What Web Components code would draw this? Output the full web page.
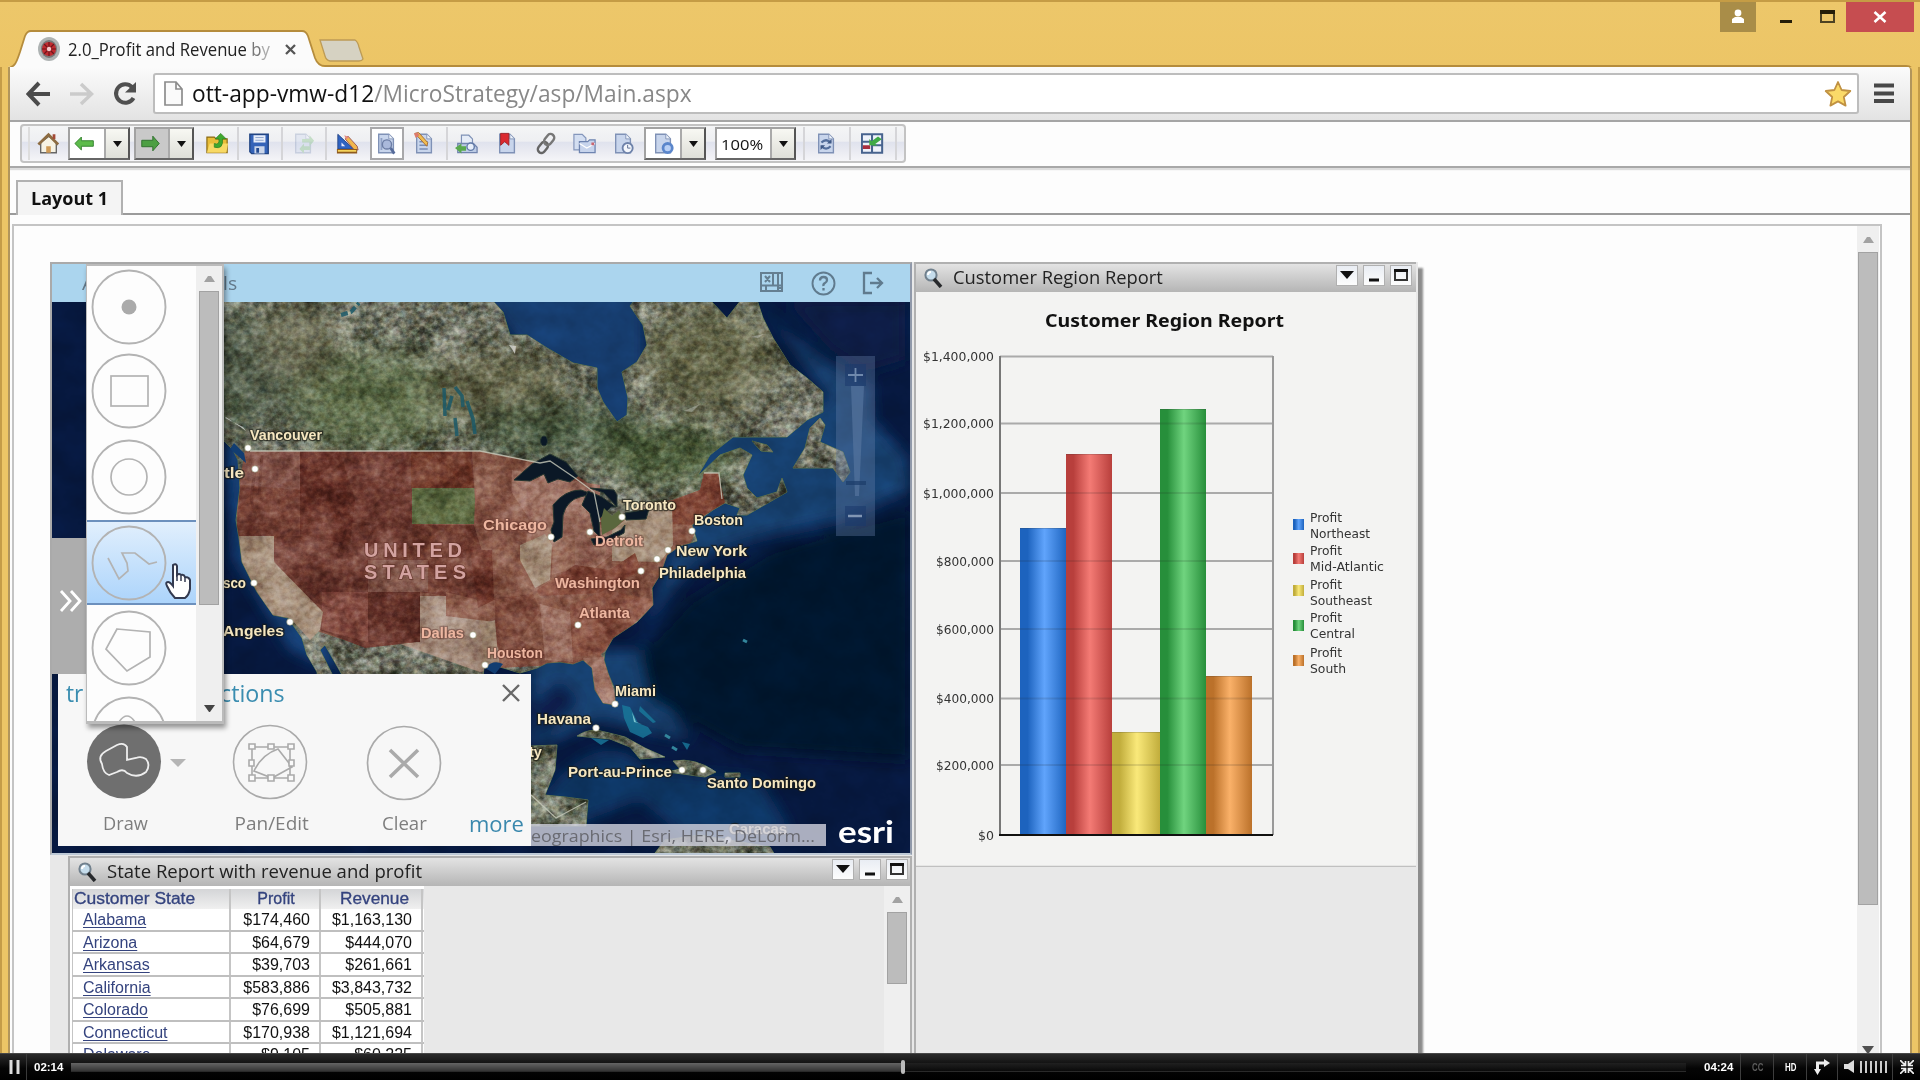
<!DOCTYPE html>
<html lang="en"><head><meta charset="utf-8"><title>2.0_Profit and Revenue by</title>
<style>
html,body{margin:0;width:1920px;height:1080px;overflow:hidden;background:#ecc566}
body{font-family:"Open Sans","Noto Sans",sans-serif;color:#111}
</style></head><body>
<app-root></app-root>
<script>
const define=(name,html,setup)=>customElements.define(name,class extends HTMLElement{
  connectedCallback(){ if(this.shadowRoot)return;
    const r=this.attachShadow({mode:'open'});
    r.innerHTML='<style>*{box-sizing:border-box}svg{display:block}</style>'+(typeof html==='function'?html(this):html);
    if(setup)setup(this,r);}
});
/* Text squeezed or stretched horizontally to a given width */
define('fit-text',`<style>:host{display:inline-block;white-space:pre;flex:none}span{display:inline-block;transform-origin:0 50%}</style><span><slot></slot></span>`,(el,r)=>{
  const s=r.querySelector('span'),w=+el.getAttribute('w');
  const n=s.offsetWidth; if(n&&w){s.style.transform=`scaleX(${w/n})`;el.style.width=w+'px';}
});

/* ---------- browser chrome ---------- */
define('title-strip',`<style>
:host{display:flex;height:67px;flex:none;position:relative;border-top:2px solid #c59c45;background:linear-gradient(#edc76a,#ecc566)}
.shape{position:absolute;left:0;top:-2px}
.tab{position:relative;display:flex;align-items:center;margin:30px 0 0 37px;height:34px;width:275px;font-size:18px}
.tab fit-text{margin-left:7px;color:#222}.tab i{color:#aaa;font-style:normal}
.x{margin-left:15px}
.grow{flex:1}.ctl{position:relative;display:flex;height:30px}
.user{width:36px;background:#a98d48;display:grid;place-items:center}
.min{width:60px;display:grid;place-items:center}.max{width:30px}
.close{width:68px;background:#c64d50;display:grid;place-items:center;margin-right:6px}
</style>
<svg class="shape" width="1920" height="67" viewBox="0 0 1920 67"><path d="M8 68V67C16 66 17 60 20 52L25 36Q27 31 31 31H302Q306 31 308 36L315 58Q318 67 325 67.5" fill="#fbfbfb"/><path d="M9 68C16 66 17 60 20 52L25 36Q27 31 31 31H302Q306 31 308 36L315 58Q318 66 325 66H1906Q1911 66 1912 69" fill="none" stroke="#b58c3c" stroke-width="1.8"/><path d="M320 40H355Q358 42 359 47L363 59Q362 61 359 61H330Q326 60 325 56Z" fill="#d6d2c2" stroke="#bd9b55" stroke-width="1.3"/></svg>
<div class="tab"><svg width="24" height="26" viewBox="0 0 24 26"><ellipse cx="12" cy="13" rx="11" ry="12" fill="#aeb3b3"/><ellipse cx="12" cy="13" rx="8" ry="9" fill="#777"/><circle cx="12" cy="13" r="7" fill="#c12b30"/><path d="M12 6v14M5 13h14M7 8l10 10M17 8L7 18" stroke="#70151b" stroke-width="1.2"/><circle cx="12" cy="13" r="2.2" fill="#f3caca"/></svg><fit-text w="202">2.0_Profit and Revenue <i><span style="color:#777">b</span>y</i></fit-text><svg class="x" width="11" height="11" viewBox="0 0 11 11"><path d="M1 1l9 9M10 1L1 10" stroke="#555" stroke-width="2.3"/></svg></div>
<div class="grow"></div>
<div class="ctl"><div class="user"><svg width="16" height="16" viewBox="0 0 16 16"><circle cx="8" cy="4" r="3.400" fill="#fff"/><path d="M2 14v-4l3-2h6l3 2v4z" fill="#fff"/></svg></div><div class="min"><svg width="14" height="14"><rect y="10" x="1" width="12" height="3" fill="#251d08"/></svg></div>
<svg class="max" width="30" height="30"><path d="M5 9v11h13V9" fill="none" stroke="#4d4222" stroke-width="2"/><path d="M4 10h15" stroke="#251d08" stroke-width="4"/></svg><div class="close"><svg width="14" height="12" viewBox="0 0 14 12"><path d="M1.500 1l11 10M12.500 1l-11 10" stroke="#fff" stroke-width="2.600"/></svg></div></div>`);

define('nav-bar',`<style>
:host{display:flex;height:55px;flex:none;align-items:center;background:linear-gradient(#fbfbfb,#e3e3e3);border-bottom:2px solid #a5a5a5;padding-left:16px}
.b{margin-right:18px}.omni{display:flex;align-items:center;flex:1;height:41px;border:2px solid #bdbdbd;border-radius:3px;background:#fff;padding:0 5px 0 9px;margin-left:-4px;margin-right:15px}
.url{font-size:23px;margin-left:9px;color:#888;line-height:30px;padding-bottom:1px}.url b{font-weight:400;color:#111}.g{flex:1}.menu{margin-right:16px}
</style>
<svg class="b" width="25" height="26" viewBox="0 0 25 26"><path d="M24 13H3M13 2L2.500 13 13 24" fill="none" stroke="#4b4b4b" stroke-width="4"/></svg>
<svg class="b" width="25" height="26" viewBox="0 0 25 26"><path d="M1 13h21M12 3l10.500 10L12 23" fill="none" stroke="#cbcbcb" stroke-width="3.500"/></svg>
<svg class="b" width="25" height="26" viewBox="0 0 25 26" style="margin-right:20px"><path d="M20 6A9.300 9.300 0 1 0 21.500 17" fill="none" stroke="#505050" stroke-width="4"/><path d="M13 11.500h11V1z" fill="#505050"/></svg>
<div class="omni"><svg width="19" height="25" viewBox="0 0 19 25"><path d="M1 1h11l6 7v16H1zM12 1v7h6" fill="#fafafa" stroke="#8c8c8c" stroke-width="1.700"/></svg><div class="url"><fit-text w="500"><b>ott-app-vmw-d12</b>/MicroStrategy/asp/Main.aspx</fit-text></div><div class="g"></div>
<svg width="28" height="28" viewBox="0 0 28 28"><path d="M14 2l3.600 8 8.700 1-6.500 6 1.800 8.600L14 21.400l-7.600 4.200L8.200 17l-6.500-6 8.700-1z" fill="#fbda68" stroke="#c09142" stroke-width="1.800" stroke-linejoin="round"/></svg></div>
<svg class="menu" width="20" height="21"><path d="M0 2.500h20M0 10.500h20M0 18h20" stroke="#484848" stroke-width="4.200"/></svg>`);

/* ---------- toolbar ---------- */
const pg='<path d="M4 2h11l5 5v15H4z" fill="#c8d5ec" stroke="#7f91b6" stroke-width="1.500"/><path d="M15 2v5h5" fill="#eef3fb" stroke="#7f91b6"/>';
const IC={
home:'<path d="M4 11v11h17V11l-8-7z" fill="#f7f3e4" stroke="#666" stroke-width="1.500"/><path d="M1.500 13L12.500 2.500 23 13" fill="none" stroke="#8d6c42" stroke-width="3"/><path d="M17 2h3v5h-3z" fill="#a34a37"/><path d="M10 15h5v7h-5z" fill="#cf9a55"/>',
back:'<path d="M1 12l7-7v4h13v6H8v4z" fill="#5dbb4b" stroke="#2f7f2b" stroke-width="1"/>',
fwd:'<path d="M22 12l-7-8v4.500H3v7h12V20z" fill="#4c9f43" stroke="#2d6e2a"/>',
folder:'<path d="M1 5h8l2 2h12v15H1z" fill="#e9bd38" stroke="#8a6a13" stroke-width="1.300"/><path d="M1 22l3-10h20l-2 10z" fill="#f8d965"/><path d="M9 12q6 2 5-5h-4l6-6 6 6h-4q1 12-9 9z" fill="#3fa82f" stroke="#287a1e" stroke-width=".7"/>',
save:'<path d="M2 2h20v21H4l-2-2z" fill="#3463b8" stroke="#224583" stroke-width="1.500"/><path d="M6 3h13v8H6z" fill="#e7edf9"/><path d="M8 5.500h9M8 8.500h9" stroke="#8ca3cc"/><path d="M7 15h11v8H7z" fill="#cbd6ea"/><path d="M9 17h3v5H9z" fill="#234a91"/>',
faded:'<g opacity=".33">'+pg+'<path d="M11 7h8V3l5 6-5 6v-4h-8zM20 15h-7v-3l-5 6 5 5v-4h7z" fill="#70b870"/></g>',
ruler:'<path d="M2 2v16h17z" fill="#2f63c3" stroke="#274785"/><path d="M6 11v4h4z" fill="#eef"/><path d="M10 7l10 12 4 0-1-4L13 4z" fill="#f1b74c" stroke="#955"/><path d="M9 3l5 2-3 3z" fill="#e58a7f"/><path d="M1 18h22v5H1z" fill="#8f5a1d"/><path d="M2 20h20" stroke="#f5d35b" stroke-width="2"/>',
preview:pg+'<path d="M7 6v13M9 9h6" stroke="#8fa0c5" stroke-width="2"/><circle cx="13" cy="13" r="5" fill="#aab9db" stroke="#6d7ea5" stroke-width="1.500"/><path d="M17 17l4 6" stroke="#566b9a" stroke-width="3"/>',
pencil:pg+'<path d="M7 10h9M7 14h9M7 18h9" stroke="#788db5" stroke-width="1.600"/><path d="M2 1l13 14 1-4L6 0z" fill="#f0bd51" stroke="#a56b2f"/><path d="M1 1l4-1 2 3-4 3z" fill="#dc7b6d"/>',
exp:'<path d="M7 3h8l4 4v8H7z" fill="#e5ecf7" stroke="#7f91b6" stroke-width="1.300"/><path d="M3 12h17l4 4v6H3z" fill="#bccbe5" stroke="#7184ae" stroke-width="1.400"/><circle cx="17" cy="15.500" r="4" fill="#e7eefa" stroke="#617aa8" stroke-width="1.500"/><path d="M0 17l7-5v3h5v5H7v3z" fill="#59a94e"/>',
mark:pg+'<path d="M5 1h9v13l-4.500-4L5 14z" fill="#db2930" stroke="#9d2027"/>',
link:'<g transform="rotate(-52 12 12)" fill="none"><rect x="0" y="8" width="13" height="8" rx="4" stroke="#666" stroke-width="2.600"/><rect x="11" y="8" width="13" height="8" rx="4" stroke="#777" stroke-width="2.600"/></g>',
mail:'<path d="M1 2h9l4 4v13H1z" fill="#d3def1" stroke="#8496bb" stroke-width="1.300"/><path d="M7 10h9l2-2h6v14H7z" fill="#c7d4ec" stroke="#6e84b0" stroke-width="1.400"/><path d="M7 12l8 5 9-5" fill="none" stroke="#fff" stroke-width="1.300"/><path d="M20 11h3v3h-3z" fill="#ca6570"/>',
sched:pg+'<circle cx="17" cy="17" r="5.500" fill="#f3f6fc" stroke="#6e82aa" stroke-width="2"/><path d="M17 13.500V17h3" fill="none" stroke="#57698f"/>',
gear:pg+'<circle cx="17" cy="17" r="5" fill="#b9d0f5" stroke="#5b86cb" stroke-width="3"/>',
refresh:pg+'<path d="M7 11q5-5 10 0M17 15q-5 5-10 0" fill="none" stroke="#536e9c" stroke-width="2.400"/><path d="M13 12h5V7zM11 14H6v5z" fill="#3f5986"/>',
grid:'<path d="M1 2h22v20H1z" fill="#eef2fa" stroke="#47638e" stroke-width="2.200"/><path d="M12 2v20M1 10h11M13 14h10" stroke="#47638e" stroke-width="2.200"/><path d="M2 14h8v4H2z" fill="#a92f3e"/><path d="M9 14V7l2.500 2.500 7-5 4 3-7 5 2.500 2z" fill="#3faa45"/>'
};
const svg=n=>`<svg width="23" height="23" viewBox="0 0 25 24">${IC[n]}</svg>`;
const dd='<i class="dd"><svg width="9" height="6"><path d="M0 0h9L4.500 6z" fill="#111"/></svg></i>';
const cell=(w,n,c='')=>`<div class="c ${c}" style="width:${w}px">${svg(n)}</div>`;
const combo=(w,inner,c='')=>`<div class="combo ${c}" style="width:${w}px"><span>${inner}</span>${dd}</div>`;
define('tool-bar',`<style>
:host{display:flex;height:46px;flex:none;padding:2px 0 0 10px;border-bottom:2px solid #a8a8a8;box-shadow:0 2px 1px #ddd;background:#fdfdfd;position:relative;z-index:1}
.bar{display:flex;align-items:stretch;height:39px;width:886px;border:2px solid #c3c3c3;border-radius:4px;background:linear-gradient(#f4f5f6 0,#eeeff2 44%,#dfe2ed 45%,#e9eaf1 70%,#f5f5f8);padding:1px 0}
.c{display:grid;place-items:center;flex:none;padding-right:2px}.s{border-right:2px solid #d5d5d8}.grip{width:8px;border-right:2px solid #ddd;flex:none}
.box{background:#fff;border:2px solid #a8a8aa}.combo{display:flex;flex:none;border:2px solid #a2a2a2;background:#fff;border-right-color:#555;border-bottom-color:#666}
.combo span{flex:1;display:grid;place-items:center;font-size:15px;padding-right:4px}.combo.k span{background:#c9c9c9}
.combo.n span{padding:0}.dd{width:24px;background:linear-gradient(#f8f8f3,#dedfd8);border-left:2px solid #aaa;display:grid;place-items:center}.gap{flex:none}
</style><div class="bar"><div class="grip"></div>${cell(38,'home')}${combo(62,svg('back'))}<div class="gap" style="width:4px"></div>${combo(60,svg('fwd'),'k')}<div class="gap" style="width:6px"></div>${cell(39,'folder','s')}${cell(44,'save','s')}${cell(44,'faded','s')}${cell(43,'ruler')}${cell(34,'preview','box')}${cell(44,'pencil','s')}${cell(39,'exp')}${cell(42,'mark')}${cell(36,'link')}${cell(40,'mail')}${cell(39,'sched')}${combo(62,svg('gear'),'n')}<div class="gap" style="width:9px"></div>${combo(81,'<fit-text w="42">100%</fit-text>')}<div class="gap s" style="width:9px"></div>${cell(46,'refresh','s')}${cell(46,'grid','s')}</div>`);

define('layout-tabs',`<style>:host{display:flex;height:47px;flex:none;align-items:flex-end;background:#fdfdfd;position:relative}
.lead{width:6px;height:2px;background:#9b9b9b}.t{width:107px;height:35px;border:2px solid #b1b1b1;border-bottom:0;background:#f4f4f4;display:flex;align-items:center;justify-content:center;font-weight:700;font-size:18px;color:#111;padding-bottom:1px}.r{flex:1;height:2px;background:#9b9b9b}</style>
<div class="lead"></div><div class="t"><fit-text w="77">Layout 1</fit-text></div><div class="r"></div>`);

/* scroll-bar: top = arrow area, thumb = thumb height, foot = arrow strip at the bottom */
define('scroll-bar',el=>`<style>:host{display:flex;flex-direction:column;align-items:center;background:#efefef}
.a{height:${el.getAttribute('top')}px;flex:none;display:grid;place-items:center}.t{flex:none;width:20px;height:${el.getAttribute('thumb')}px;background:#bcbcbc;border:1.500px solid #a2a2a2}.g{flex:1}.e{height:${el.getAttribute('foot')||0}px;overflow:hidden}</style>
<div class="a"><svg width="11" height="7"><path d="M0 7L4 1h3l4 6z" fill="#a2a2a2"/></svg></div><div class="t"></div><div class="g"></div>${el.hasAttribute('foot')?'<div class="e"><svg width="12" height="7"><path d="M0 0h12L7 7H5z" fill="#505050"/></svg></div>':''}`);

/* ---------- report window ---------- */
define('report-window',el=>`<style>:host{display:flex;flex-direction:column;border:2px solid #b0b0b0;border-bottom:0}
header{height:28px;flex:none;display:flex;align-items:center;background:linear-gradient(#e3e3e3,#b5b5b5);padding:0 ${el.getAttribute('pr')||2}px 0 7px;font-size:18px;color:#222}
header fit-text{margin:-3px 0 0 10px;line-height:26px}.g{flex:1}.b{width:22px;height:21px;margin:0 0 6px 5px;background:linear-gradient(#e9edf3,#fdfdfd);border:1px solid #b0b0b0;display:grid;place-items:center}.body{flex:1;display:flex;min-height:0}</style>
<header><svg width="20" height="20" viewBox="0 0 20 20"><circle cx="8" cy="7" r="5.600" fill="#c5dceb" stroke="#71808d" stroke-width="2"/><path d="M5 7q0-3 3-3" stroke="#fff" stroke-width="2" fill="none"/><path d="M11 11l7 8" stroke="#27292c" stroke-width="3.500"/></svg><fit-text w="${el.getAttribute('w')}">${el.getAttribute('label')}</fit-text><div class="g"></div>
<div class="b"><svg width="14" height="8"><path d="M0 0h14L7 8z" fill="#111"/></svg></div><div class="b"><svg width="12" height="14"><path d="M1 12h10" stroke="#111" stroke-width="3"/></svg></div><div class="b"><svg width="16" height="14"><path d="M2 3v9h12V3" fill="none" stroke="#333" stroke-width="2"/><path d="M1 2.500h14" stroke="#111" stroke-width="3"/></svg></div></header><div class="body"><slot></slot></div>`);

/* ---------- chart ---------- */
const bars=[[1020,47,528,'#1d63be','#60a4fc'],[1066,46,454,'#b83f3c','#f47b75'],[1112,48,732,'#c1ad3c','#fae97a'],[1160,46,409,'#278f3b','#70d47f'],[1206,46,676,'#bb712a','#fab169']];
const leg=[['Northeast',522,519,60],['Mid-Atlantic',555,553,74],['Southeast',589,585,62],['Central',622,620,45],['South',657,655,36]];
define('bar-chart',()=>{const gy=[356.5,423.5,493,561,629,698.5,765,835];let s='';
gy.slice(0,7).forEach(y=>s+=`<path d="M1000 ${y}h273" stroke="#aaa" stroke-width="1.800"/>`);
gy.forEach((y,i)=>{const v=1400000-i*200000,t='$'+v.toLocaleString('en-US'),w=v?(v>999999?71:58):16;s+=`<text x="${994-w}" y="${y+4.500}" textLength="${w}" lengthAdjust="spacingAndGlyphs">${t}</text>`});
bars.forEach((b,i)=>{s+=`<linearGradient id="b${i}"><stop offset="0" stop-color="${b[3]}"/><stop offset=".16" stop-color="${b[3]}"/><stop offset=".52" stop-color="${b[4]}"/><stop offset="1" stop-color="${b[3]}"/></linearGradient><rect x="${b[0]}" y="${b[2]}" width="${b[1]}" height="${835-b[2]}" fill="url(#b${i})"/><path d="M${b[0]} ${b[2]+.5}h${b[1]}" stroke="#333" opacity=".2"/>`;
 gy.slice(0,7).forEach(y=>{if(y>b[2])s+=`<path d="M${b[0]} ${y}h${b[1]}" stroke="#222" stroke-width="1.800" opacity=".13"/>`});
 s+=`<rect x="1293" y="${leg[i][2]}" width="11" height="11" fill="url(#b${i})"/><text x="1310" y="${leg[i][1]}" textLength="32" lengthAdjust="spacingAndGlyphs">Profit</text><text x="1310" y="${leg[i][1]+16}" textLength="${leg[i][3]}" lengthAdjust="spacingAndGlyphs">${leg[i][0]}</text>`});
return `<style>:host{display:block}text{font:12.500px "DejaVu Sans",sans-serif;fill:#333}.h{font:700 18px "Noto Sans","Open Sans",sans-serif;fill:#111}</style><svg width="500" height="575" viewBox="916 292 500 575"><rect x="916" y="292" width="500" height="575" fill="#f3f3f2"/><text class="h" x="1045" y="327" textLength="239" lengthAdjust="spacingAndGlyphs">Customer Region Report</text>${s}<path d="M1000 356V835" stroke="#777" stroke-width="2"/><path d="M1273 356V835" stroke="#999" stroke-width="2"/><path d="M999 835H1273" stroke="#111" stroke-width="2"/><path d="M916 866.500h500" stroke="#c0c0c0" stroke-width="1.500"/></svg>`});

/* ---------- state table ---------- */
const rows=[['Alabama','$174,460','$1,163,130'],['Arizona','$64,679','$444,070'],['Arkansas','$39,703','$261,661'],['California','$583,886','$3,843,732'],['Colorado','$76,699','$505,881'],['Connecticut','$170,938','$1,121,694'],['Delaware','$9,105','$60,225']];
define('state-table',`<style>:host{display:block;width:354px;background:#fff;padding:3px 0 0 2px;overflow:hidden;font:16px/21px "Liberation Sans",Arial,sans-serif}
.r{display:grid;grid-template-columns:159px 90px 102px;height:22.500px;border-bottom:2px solid #bfbfbf}.r>*{border-right:2px solid #c5c5c5;padding-right:9px;text-align:right}
.r>:first-child{text-align:left;padding-left:10px;border-left:1px solid #c5c5c5}.h{height:20px;background:linear-gradient(#d4d5d7,#f0f0f0);border:0;color:#34437e;-webkit-text-stroke:.3px #34437e;line-height:20px}.h>*{text-align:center!important;padding:0 0 0 2px!important}.h>:first-child{text-align:left!important;padding-left:1px!important}
a{color:#34437e;text-decoration:underline;text-underline-offset:2px}</style>
<div class="r h"><span><fit-text w="121">Customer State</fit-text></span><span>Profit</span><span><fit-text w="69">Revenue</fit-text></span></div>${rows.map(r=>`<div class="r"><span><a>${r[0]}</a></span><span>${r[1]}</span><span>${r[2]}</span></div>`).join('')}`);

/* ---------- map ---------- */
const land='M224 300V441L233 450 238 460 240 488 236 520 239 538 242 562 257 592 273 615 288 618 302 638 307 655 317 672 320 700H345L320 650 325 645 345 680V700H480L484 668 500 667 520 673 537 668 547 663 560 662 573 664 583 660 592 668 595 690 603 703 615 705 615 690 608 673 604 660 605 652 613 638 637 622 653 605 652 588 660 575 667 555 680 546 697 541 692 525 713 510 725 503 740 508 737 515 747 515 787 492 782 478 777 492 757 498 747 488 743 475 752 455 740 448 720 455 697 477 710 455 733 437 787 437 807 420 823 412 823 392 807 378 790 365 773 338 763 318 757 300H741L727 318 710 300H635L630 306 643 325 647 345 637 362 622 372 628 398 627 415 617 422 603 402 597 388 597 368 573 363 547 348 527 335 510 335 503 312 492 300Z M820 418L825 425 820 442 843 452 850 472 843 482 833 468 793 468 805 448 810 428Z M752 441l15 4 6 7-12-1z M577 736Q590 727 605 732L625 737 645 748 665 757 640 759 630 747 610 739Z M673 761Q695 757 716 772L705 777 690 775 667 772 680 769Z M725 773h15v4h-15z M531 746L557 745 555 770 545 795 565 797 588 800 586 826H531Z M655 853L665 840 700 835 770 847 775 855Z';
const P=(pts,f)=>`<polygon points="${pts}" fill="${f}"/>`;
const med='#8c5a4c',lt='#a17468',pale='#a8917f';
const L=(x,y,w,t,c='')=>`<text x="${x}" y="${y}" textLength="${w}" lengthAdjust="spacingAndGlyphs" class="${c}">${t}</text>`;
const dots=[[248,448],[255,469],[254,583],[290,622],[473,635],[485,665],[551,537],[590,532],[622,517],[692,531],[668,550],[657,559],[641,571],[578,625],[615,704],[596,728],[682,770],[703,770],[728,840]];
define('satellite-map',`<style>:host{display:block}text{font:700 14.500px "Liberation Sans",Arial,sans-serif;fill:#f6e7c0;stroke:#1b1b14;stroke-width:2.600px;stroke-opacity:.65;paint-order:stroke}.p{fill:#edb6a0;stroke:#5a2b22;stroke-opacity:.4}.u{font-size:20px;fill:#d3a3a0;stroke:#5a2b22;stroke-width:1.500px}.e{font:700 31px Lato,"Open Sans",sans-serif;fill:#fff;stroke:none}.at{font:400 17px "Open Sans",sans-serif;fill:#6a6b72;stroke:none}</style>
<svg width="858" height="551" viewBox="52 302 858 551"><defs>
<clipPath id="lc"><path d="${land}"/></clipPath>
<filter id="n" x="0" y="0" width="1" height="1" color-interpolation-filters="sRGB"><feTurbulence type="fractalNoise" baseFrequency=".15 .17" numOctaves="5" seed="8"/><feColorMatrix values="1.4 .4 0 0 -.44  1.5 .1 0 0 -.34  1.4 0 .3 0 -.42  0 0 0 0 1"/></filter>
<filter id="m" x="0" y="0" width="1" height="1" color-interpolation-filters="sRGB"><feTurbulence type="fractalNoise" baseFrequency=".03 .035" numOctaves="5" seed="21"/><feColorMatrix values="1.7 0 0 0 -.4  1.7 0 0 0 -.38  1.7 0 0 0 -.4  0 0 0 0 1"/></filter>
<filter id="bl"><feGaussianBlur stdDeviation="7"/></filter><filter id="b2" x="-20%" y="-20%" width="140%" height="140%"><feGaussianBlur stdDeviation="14"/></filter><linearGradient id="lg" x2=".2" y2="1"><stop stop-color="#636849"/><stop offset=".6" stop-color="#65654a"/><stop offset="1" stop-color="#505a36"/></linearGradient></defs>
<rect x="50" y="300" width="864" height="555" fill="#06183f"/>
<g filter="url(#bl)"><path d="M480 290H645V430H580Z" fill="#153e70"/><path d="M752 290L785 330 825 362 870 385 872 420 905 455 912 490 840 520 770 535 720 550 690 570 665 600 640 640 660 690 690 740 640 730 600 720 545 745H531V650H640L680 520 700 430 830 400Z" fill="#143f70"/><path d="M224 440L235 560 290 650 340 672 320 610 245 440Z" fill="#164379"/><path d="M540 800Q600 720 650 770L760 780 790 830 700 850 640 800 560 830Z" fill="#103664"/><path d="M785 300L830 350 865 372 905 360V300Z" fill="#071a45"/><path d="M640 655L690 600 770 550 910 510V760L740 750 650 700Z" fill="#04122f"/><path d="M531 705L560 680 580 700 540 740Z" fill="#081e4a"/></g>
<rect x="50" y="302" width="862" height="551" filter="url(#m)" opacity=".1" style="mix-blend-mode:overlay"/>
<path d="${land}" fill="url(#lg)" stroke="#55704b" stroke-width="1"/>
<g clip-path="url(#lc)"><g filter="url(#b2)" opacity=".75"><ellipse cx="240" cy="370" rx="45" ry="60" fill="#3a4835"/><ellipse cx="370" cy="400" rx="90" ry="50" fill="#5f7048"/><ellipse cx="500" cy="390" rx="70" ry="40" fill="#6c6a4e"/><ellipse cx="560" cy="430" rx="90" ry="30" fill="#42553a"/><ellipse cx="710" cy="360" rx="70" ry="55" fill="#67674a"/><ellipse cx="670" cy="455" rx="70" ry="30" fill="#4c6038"/><ellipse cx="300" cy="340" rx="40" ry="40" fill="#6d6c52"/><path d="M222 310L245 330 265 370 310 420 300 428 260 390 222 350Z" fill="#6d7868"/></g>
${P('245,451 480,451 500,455 540,463 570,470 590,485 605,510 610,525 625,520 640,505 672,500 700,490 704,473 718,473 722,500 700,520 690,545 660,580 656,606 600,650 615,710 590,700 580,664 500,668 480,672 415,640 365,647 320,632 290,618 240,560 236,500',med)}
${P('300,451 472,451 475,488 412,488 412,525 474,525 484,558 495,600 478,600 446,592 446,596 420,592 420,642 365,648 320,630 323,612 290,585 274,560 274,536 300,535','#764038')}
${P('411,451 470,451 474,488 411,488','#733a2d')}${P('412,488 475,488 475,524 412,524','#65714a')}${P('412,524 470,526 484,560 430,560 390,560 390,545 412,545','#743e34')}
${P('368,560 428,560 428,592 368,592','#86594f')}${P('428,558 486,558 492,600 446,592 428,592','#7c463c')}${P('368,592 420,592 420,642 368,642','#6a352e')}${P('322,592 368,592 368,642 322,630','#874d45')}
${P('300,451 340,451 355,500 350,545 300,534','#6c342c')}${P('247,451 300,451 300,490 240,485','#895850')}${P('240,485 300,490 300,536 236,536','#80493f')}
${P('239,536 274,536 274,562 323,612 320,630 310,640 290,618 270,615 240,562',pale)}${P('420,596 446,596 446,616 495,622 500,668 480,672 400,644 420,642','#aa9184')}
${P('472,451 512,457 540,464 514,480 512,500 475,500',med)}${P('512,470 600,485 600,535 560,548 510,545',lt)}${P('475,500 510,490 530,520 525,548 490,548 474,525','#915f52')}
${P('520,545 545,534 552,545 550,580 535,588 520,560',pale)}${P('553,540 575,535 577,567 552,575','#9b6d5e')}${P('575,522 612,530 612,555 590,572 575,565',lt)}
${P('625,520 640,503 672,501 673,545 660,562 612,561 612,530',pale)}${P('672,501 700,490 704,473 718,473 725,503 700,518 692,525 673,524','#84483a')}
${P('537,590 575,565 610,570 635,553 641,570 600,593 540,596','#85493c')}${P('470,550 492,550 494,600 478,608','#753b31')}${P('495,598 533,594 540,610 520,640 545,655 520,668 495,645','#7f4a3e')}${P('540,604 570,612 573,662 545,660',lt)}${P('570,605 605,590 655,600 625,635 600,655 573,657','#90584a')}${P('583,658 604,657 618,705 601,703',lt)}${P('480,625 495,620 498,655 485,665',pale)}
<g fill="none" stroke="#5d2b24" opacity=".35" stroke-width="3"><path d="M255 470l-4 30 6 20M262 455l-3 40M325 490l20 30 30 5-10 25M350 520l-15 40M310 600l25 8M390 620l12-18"/></g>
<rect x="220" y="300" width="640" height="555" filter="url(#n)" opacity=".42" style="mix-blend-mode:soft-light"/>
<rect x="220" y="300" width="640" height="555" filter="url(#m)" opacity=".45" style="mix-blend-mode:soft-light"/></g>
<g stroke="#1b5968" stroke-width="4" fill="none" opacity=".85"><path d="M341 315l10-3 8-9" stroke-dasharray="7 3"/><path d="M455 387l7 9 1 11M467 401l6 18 2 15M452 396l-4 14M444 388l1 28M455 418l2 18" stroke-width="3.500"/></g><g fill="#fff" opacity=".6"><path d="M226 417l20 14-3-4-18-9zM509 345l7 1-1 8-3-5z"/><path d="M750 337l14-3-6 4zM684 411l16-7-8 8z" opacity=".5"/></g>
<path d="M230 449L246 463 244 453 234 443ZM485 668Q493 659 503 664L495 674Z" fill="#123d71"/>
<g fill="#0b1826" stroke="#26352f"><path d="M514 480l18-16 18-10 16 8 12 14-8 6-12-3-10 4-4-9-14 7z"/><path d="M553 505q12-15 28-15l11 4-12 3q-13 3-17 18l-1 22-8 5-3-12 3-8z"/><path d="M588 491l14 6 14 10-5 0-12 12 1 18-6-6-4-18-8-8z"/><path d="M614 490l-24-2 14 5 13 14 0-12zM591 539l16-2 14-7 4-5-1 8-15 8-15 4z M625 513l24-4-3 10-20 1z"/><ellipse cx="544" cy="441" rx="3.500" ry="5"/></g><path d="M604 508l8 8 7-6 5 10-9 8-13 7-1-15z" fill="#5a673d"/>
<path d="M250 451H480L500 455 540 463 550 461 575 478 594 492 600 522M704 473h15l3 26M531 795l25 23 30-16" fill="none" stroke="#c8cbbb" stroke-width="1.300" opacity=".8"/>
<g fill="#197b9c"><path d="M622 705l8 2 8 16 10 4 4 6-9 5-13-6-6-14zM640 706l16 16-3 1-14-12zM682 742l8 2-3 6zM591 738l18 2-8 5z" opacity=".8"/><path d="M632 712l4 10 6 2-8-2z" fill="#7cc6d1"/><path d="M665 735l5 3M672 747l5 3M743 640l4 2" stroke="#33869c" stroke-width="3"/></g>
${L(250,440,72,'Vancouver')}${L(224,478,20,'tle')}${L(223,588,23,'sco')}${L(223,636,61,'Angeles')}${L(421,638,43,'Dallas','p')}${L(487,658,56,'Houston','p')}${L(483,530,64,'Chicago','p')}${L(595,546,48,'Detroit','p')}${L(623,510,53,'Toronto')}${L(694,525,49,'Boston')}${L(676,556,71,'New York')}${L(659,578,87,'Philadelphia')}${L(555,588,85,'Washington','p')}${L(579,618,51,'Atlanta','p')}${L(615,696,41,'Miami')}${L(537,724,54,'Havana')}${L(529,757,13,'ty')}${L(568,777,104,'Port-au-Prince')}${L(707,788,109,'Santo Domingo')}${L(729,834,58,'Caracas')}
<text class="u" x="364" y="557" textLength="98">UNITED</text><text class="u" x="364" y="579" textLength="102">STATES</text>
<g fill="#fff" stroke="#886" stroke-width=".6">${dots.map(d=>`<circle cx="${d[0]}" cy="${d[1]}" r="3.300"/>`).join('')}</g>
<rect x="440" y="824" width="386" height="22" fill="#ced0dc" opacity=".82"/>${L(531,842,284,'eographics | Esri, HERE, DeLorm...','at')}${L(838,843,56,'esri','e')}
<g><rect x="836" y="356" width="39" height="180" fill="#6780a8" opacity=".36"/><rect x="845" y="364" width="21" height="22" fill="#19396b" opacity=".55"/><path d="M855.500 368v14M848 375h15" stroke="#6f89ac" stroke-width="1.800"/><path d="M851 386h13l-5 110h-4z" fill="#57779f" opacity=".65"/><path d="M846 483h20" stroke="#1b3c69" stroke-width="4" opacity=".7"/><rect x="845" y="506" width="21" height="20" fill="#19396b" opacity=".55"/><path d="M848 516h14" stroke="#8196b4" stroke-width="2.500"/></g></svg>`);

/* ---------- drawing tool menu ---------- */
const shapes=['<circle cx="39" cy="39" r="7.500" fill="#aaa" stroke="none"/>','<rect x="21" y="24" width="37" height="30"/>','<circle cx="39" cy="39" r="18"/>','<path d="M18 34l11 21 9-8-1-8-5-10h13l14 11 8-2"/>','<path d="M27 20l33 3v25L37 62 16 40z"/>','<path d="M29 27q8-12 16 0"/>'];
define('draw-menu',`<style>:host{display:flex;background:#fdfdfd;border:2px solid #bbb;border-width:2px 2px 3px 1px;box-shadow:2px 4px 5px #0006}
.l{flex:1;overflow:hidden}.i{height:86px;padding:0 0 0 3px;display:flex;align-items:center}.i:first-child{height:82px}.i.on{height:85px;border:solid #6c90bd;border-width:2px 0;background:linear-gradient(#e1effd,#acd4fb)}
svg{fill:none;stroke:#b3b3b3;stroke-width:1.700}.foot{margin:0 auto 9px}.w{display:flex;flex-direction:column;background:#efefef}scroll-bar{flex:1;width:26px}</style>
<div class="l">${shapes.map((s,i)=>`<div class="i ${i==3?'on':''}"><svg width="78" height="78" viewBox="0 0 78 78" style="flex:none"><circle cx="39" cy="39" r="36.500" stroke-width="1.900"/>${s}</svg></div>`).join('')}</div><div class="w"><scroll-bar top="25" thumb="314"></scroll-bar><svg class="foot" width="11" height="7"><path d="M0 0h11L6 7H5z" fill="#444" stroke="none"/></svg></div>`);

define('action-panel',`<style>:host{display:flex;flex-direction:column;background:#f7f7f7;color:#3a8db0}
header{display:flex;align-items:center;height:37px;padding:0 10px 0 8px;font-size:24px}header .g{flex:1}
.row{display:flex;align-items:flex-start;padding-left:28px;margin-top:13px;color:#7e7e7e;font-size:19px}.a{display:flex;flex-direction:column;align-items:center;width:76px}.a fit-text{margin-top:10px}.more{font-size:22px;color:#3a88ad;align-self:flex-end;margin:0 0 -2px 27px}</style>
<header><fit-text w="17">tr</fit-text><fit-text w="65" style="margin-left:137px">ctions</fit-text><div class="g"></div><svg width="20" height="20"><path d="M2 2l16 16M18 2L2 18" stroke="#686868" stroke-width="2.400"/></svg></header>
<div class="row"><div class="a"><svg width="76" height="76" viewBox="0 0 76 76"><circle cx="38" cy="37.500" r="37" fill="#6f6f6f"/><path d="M41 37V24q-3-5-10-2L20 28q-9 5-4 13 1 9 7 11l8-3q6-4 10 1 10 6 19-1 5-7 0-13-5-3-10-1z" transform="translate(0 -1)" fill="none" stroke="#eee" stroke-width="1.800"/></svg><fit-text w="45" style="margin-left:2px">Draw</fit-text></div>
<svg width="16" height="8" style="margin:35px 46px 0 8px"><path d="M0 0h16L8 8z" fill="#b5b5b5"/></svg>
<div class="a"><svg width="76" height="76" viewBox="0 0 76 76" fill="none" stroke="#aaa" stroke-width="1.600"><circle cx="38" cy="38" r="36.500"/><path d="M20 23H58V54H20zM23 45Q31 30 46 25L60 43 40 54 22 47z"/><g fill="#fafafa"><path d="M17 20h6v5h-6zM36 20h6v5h-6zM56 20h6v5h-6zM17 36h5v6h-5zM57 36h5v6h-5zM17 51h6v6h-6zM36 51h6v6h-6zM56 51h6v6h-6z"/></g></svg><fit-text w="74" style="margin-left:3px">Pan/Edit</fit-text></div>
<div class="a" style="margin-left:58px;margin-top:1px"><svg width="76" height="76" viewBox="0 0 76 76" fill="none" stroke="#aaa"><circle cx="38" cy="38" r="36.500" stroke-width="1.700"/><path d="M24 25l28 27M52 25L24 52" stroke-width="3.600"/></svg><fit-text w="45" style="margin-top:9px">Clear</fit-text></div><fit-text class="more" w="55">more</fit-text></div>`);

define('map-panel',`<style>:host{display:block;width:862px;height:593px;border:2px solid #aaa;border-bottom-color:#bdc9d6;position:relative;border-right-color:#9099aa}
header{height:38px;background:#abd5ee;display:flex;align-items:center;padding-left:30px;font-size:18px;color:#63798a}header .g{flex:1}header svg{margin-right:26px}
.tog{position:absolute;left:0;top:274px;width:35px;height:136px;background:#adadad}.tog svg{margin:51px 0 0 7px}action-panel{position:absolute;left:6px;top:410px;width:473px;height:172px}draw-menu{position:absolute;left:34px;top:0;width:138px;height:460px}.cur{position:absolute;left:112px;top:298px}</style>
<header><fit-text w="12">A</fit-text><fit-text w="14" style="margin-left:129px">ls</fit-text><div class="g"></div>
<svg width="26" height="24" viewBox="0 0 26 24" fill="none" stroke="#657f91" stroke-width="2"><path d="M2 2h21v18H2zM2 14.500h21M19 2v17M14 2v12M6 5l5 6M11 5l-5 6M7 14v6M19 17h3"/></svg><svg width="25" height="25" viewBox="0 0 25 25" fill="none" stroke="#607b8e" stroke-width="1.900"><circle cx="12.500" cy="12.500" r="11"/><path d="M9 9.500q0-3.500 3.500-3.500t3.500 3q0 2-2 3t-1.500 3M12.500 17v2.500" stroke-width="2.300"/></svg><svg width="22" height="24" viewBox="0 0 22 24" fill="none" stroke="#607b8e" stroke-width="2.300" style="margin-right:26px"><path d="M10 2H2v20h8M8 12h12M15 7l5 5-5 5"/></svg></header>
<satellite-map></satellite-map><div class="tog"><svg width="24" height="24" viewBox="0 0 24 24"><path d="M2 2l9 10-9 10M12 2l9 10-9 10" fill="none" stroke="#fff" stroke-width="2.800"/></svg></div><action-panel></action-panel><draw-menu></draw-menu>
<svg class="cur" width="28" height="38" viewBox="0 0 28 38"><path d="M9 3q3-2 4 1v9q2-2 4 0 3-1 4 2 4 0 5 3v9q-1 6-5 9H11Q6 31 3 24q-2-4 1-4 2 0 5 4z" fill="#fff" stroke="#333a50" stroke-width="2"/><path d="M13 13v6M17 14v5M21 15v5" stroke="#333a50" stroke-width="1.500"/></svg>`);

/* ---------- page content ---------- */
define('dash-board',`<style>:host{display:flex;flex:1;min-height:0;background:#fdfdfd;padding:9px 28px 0 2px}
.pane{flex:1;display:flex;border:2px solid #c4c4c4;border-bottom:0;min-height:0}.can{flex:1;padding:36px 0 0 36px;overflow:hidden}
.d{display:flex;width:1368px;height:800px;background:#e8e8e8;box-shadow:5px 6px 2px #8c8c8c}.left{width:862px;margin-right:2px}.st{width:844px;height:210px;margin:1px 0 0 18px}.right{width:502px;border-right:0}.g{flex:1}scroll-bar.s{width:26px}scroll-bar.m{width:22px;margin-right:1px}</style>
<div class="pane"><div class="can"><div class="d"><div class="left"><map-panel></map-panel><report-window class="st" label="State Report with revenue and profit" w="315"><state-table></state-table><div class="g"></div><scroll-bar class="s" top="26" thumb="72"></scroll-bar></report-window></div><report-window class="right" label="Customer Region Report" w="210" pr="4"><bar-chart></bar-chart></report-window></div></div><scroll-bar class="m" top="26" thumb="653" foot="7"></scroll-bar></div>`);

define('video-bar',`<style>:host{display:flex;height:27px;flex:none;background:linear-gradient(#2b2b2b,#050505 55%,#000);border-top:1px solid #484848;color:#fff;font:700 11.500px "Liberation Sans",Arial,sans-serif;align-items:center}
.p{width:27px;height:26px;border-right:1px solid #3a3a3a;display:flex;align-items:center;justify-content:center;flex:none;padding-left:4px}.t{margin:0 0 0 7px}.track{flex:1;margin:0 18px 0 8px;height:9px;background:linear-gradient(#202020,#0a0a0a);display:flex;align-items:center;border-bottom:1px solid #2a2a2a}.f{width:830px;height:8px;background:linear-gradient(#646464,#343434)}.k{width:4px;height:14px;background:#bbb;border-radius:2px}
.c{height:26px;border-left:1px solid #3d3d3d;display:grid;place-items:center;font-size:10px}</style>
<div class="p"><svg width="12" height="14"><path d="M2 0v14M9 0v14" stroke="#ddd" stroke-width="3"/></svg></div><fit-text class="t" w="29">02:14</fit-text><div class="track"><div class="f"></div><div class="k"></div></div><fit-text w="29" style="margin:0 7px 0 0">04:24</fit-text>
<div class="c" style="width:33px;color:#5d5d5d"><fit-text w="11">CC</fit-text></div><div class="c" style="width:33px"><fit-text w="11">HD</fit-text></div><div class="c" style="width:31px"><svg width="16" height="16" viewBox="0 0 16 16"><path d="M3.500 12V4H11" fill="none" stroke="#eee" stroke-width="3"/><path d="M10 0l6 4-6 4zM0 10h7l-3.500 6z" fill="#eee"/></svg></div><div class="c" style="width:55px;padding-left:2px"><svg width="44" height="14" viewBox="0 0 44 14"><path d="M0 4h4l6-4v13L4 9H0z" fill="#ddd"/><path d="M17 1v12M22 1v12M27 1v12M32 1v12M37 1v12M42 1v12" stroke="#ccc" stroke-width="2"/></svg></div><div class="c" style="width:28px"><svg width="14" height="14" viewBox="0 0 14 14"><path d="M5.500 1v4.500H1M8.500 1v4.500H13M5.500 13V8.500H1M8.500 13V8.500H13M5 5L0 0M9 5l5-5M5 9l-5 5M9 9l5 5" fill="none" stroke="#eee" stroke-width="1.700"/></svg></div>`);

define('app-root',`<style>:host{display:flex;flex-direction:column;width:1920px;height:1080px;overflow:hidden}
.w{flex:1;display:flex;flex-direction:column;min-height:0;border:solid #c49c48;border-width:0 2px;background:#ecc566;padding:0 6px 0 6px}.in{flex:1;min-height:0;display:flex;flex-direction:column;border:solid #b1955b;border-width:0 2px;overflow:hidden;border-radius:0 4px 0 0}</style>
<title-strip></title-strip><div class="w"><div class="in"><nav-bar></nav-bar><tool-bar></tool-bar><layout-tabs></layout-tabs><dash-board></dash-board></div></div><video-bar></video-bar>`);
</script></body></html>
